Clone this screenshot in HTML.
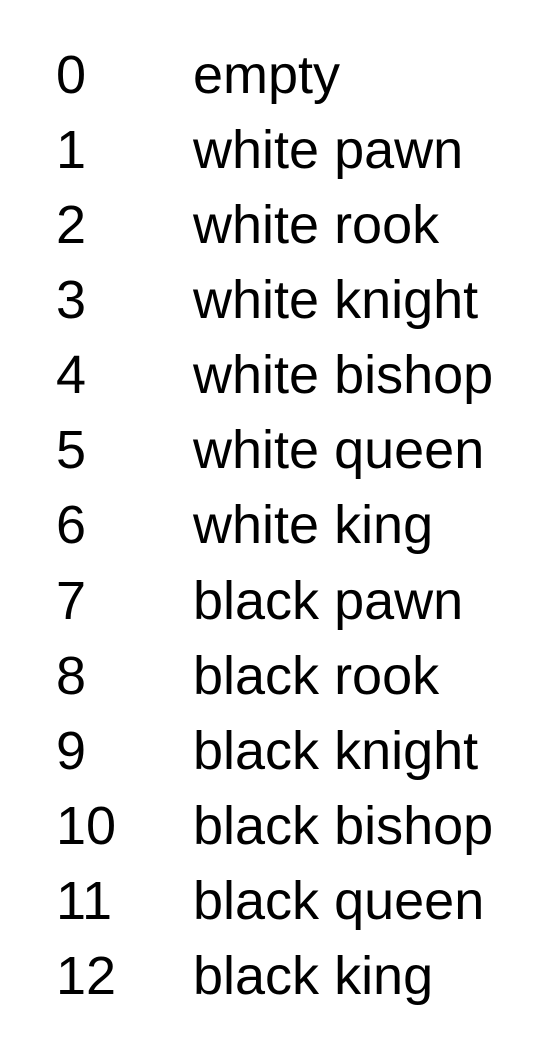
<!DOCTYPE html>
<html><head><style>
body{margin:0;width:540px;height:1044px;background:#fff;overflow:hidden}
.w{position:absolute;top:38px;left:0;font-family:"Liberation Sans",Arial,sans-serif;font-size:54px;line-height:75.08px;color:#000}
.r{position:relative;height:75.08px;white-space:nowrap}
.n{position:absolute;left:56px}
.t{position:absolute;left:193px}
</style></head><body><div class="w">
<div class="r"><span class="n">0</span><span class="t">empty</span></div>
<div class="r"><span class="n">1</span><span class="t">white pawn</span></div>
<div class="r"><span class="n">2</span><span class="t">white rook</span></div>
<div class="r"><span class="n">3</span><span class="t">white knight</span></div>
<div class="r"><span class="n">4</span><span class="t">white bishop</span></div>
<div class="r"><span class="n">5</span><span class="t">white queen</span></div>
<div class="r"><span class="n">6</span><span class="t">white king</span></div>
<div class="r"><span class="n">7</span><span class="t">black pawn</span></div>
<div class="r"><span class="n">8</span><span class="t">black rook</span></div>
<div class="r"><span class="n">9</span><span class="t">black knight</span></div>
<div class="r"><span class="n">10</span><span class="t">black bishop</span></div>
<div class="r"><span class="n">11</span><span class="t">black queen</span></div>
<div class="r"><span class="n">12</span><span class="t">black king</span></div>
</div></body></html>
